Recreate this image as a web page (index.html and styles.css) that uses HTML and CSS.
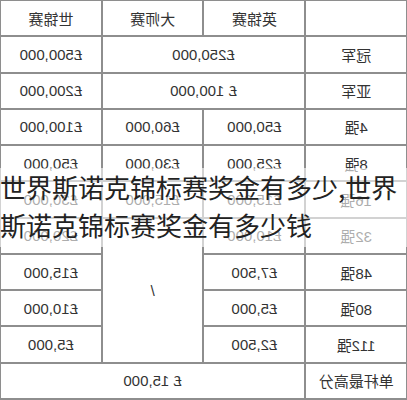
FILE: index.html
```html
<!DOCTYPE html>
<html lang="zh">
<head>
<meta charset="utf-8">
<title>世界斯诺克锦标赛奖金</title>
<link rel="stylesheet" href="styles.css">
</head>
<body>
<div class="page">
  <div class="prize-table">
    <div class="cell"></div>
    <div class="cell">英锦赛</div>
    <div class="cell">大师赛</div>
    <div class="cell">世锦赛</div>

    <div class="cell">冠军</div>
    <div class="cell span2">£250,000</div>
    <div class="cell">£500,000</div>

    <div class="cell">亚军</div>
    <div class="cell span2">£ 100,000</div>
    <div class="cell">£200,000</div>

    <div class="cell">4强</div>
    <div class="cell">£50,000</div>
    <div class="cell">£60,000</div>
    <div class="cell">£100,000</div>

    <div class="cell">8强</div>
    <div class="cell">£25,000</div>
    <div class="cell">£30,000</div>
    <div class="cell">£50,000</div>

    <div class="cell">16强</div>
    <div class="cell">£15,000</div>
    <div class="cell">£15,000</div>
    <div class="cell">£30,000</div>

    <div class="cell">32强</div>
    <div class="cell">£10,000</div>
    <div class="cell rspan4">/</div>
    <div class="cell">£20,000</div>

    <div class="cell">48强</div>
    <div class="cell">£7,500</div>
    <div class="cell">£15,000</div>

    <div class="cell">80强</div>
    <div class="cell">£5,000</div>
    <div class="cell">£10,000</div>

    <div class="cell">112强</div>
    <div class="cell">£2,500</div>
    <div class="cell">£5,000</div>

    <div class="cell">单杆最高分</div>
    <div class="cell span3">£ 15,000</div>
  </div>
  <div class="caption">世界斯诺克锦标赛奖金有多少,世界斯诺克锦标赛奖金有多少钱</div>
</div>
</body>
</html>
```

FILE: styles.css
```css
html, body {
  margin: 0;
  padding: 0;
  background: #ffffff;
}

.page {
  position: relative;
  width: 407px;
  height: 400px;
  overflow: hidden;
}

.prize-table {
  display: grid;
  grid-template-columns: repeat(4, 1fr);
  grid-template-rows: repeat(11, 1fr);
  gap: 2px;
  padding: 1px 1px 2px 1px;
  box-sizing: border-box;
  width: 407px;
  height: 400px;
  background: #8e8e8e;
  transform: scaleX(-1);
  font-family: "Liberation Sans", "Noto Sans CJK SC", sans-serif;
  font-size: 15px;
  color: #333333;
}

.cell {
  background: #ffffff;
  display: flex;
  align-items: center;
  justify-content: center;
  white-space: nowrap;
}

.span2 {
  grid-column: span 2;
}

.span3 {
  grid-column: span 3;
}

.rspan4 {
  grid-row: span 4;
}

.caption {
  position: absolute;
  left: 0;
  top: 168px;
  width: 407px;
  height: 79px;
  box-sizing: border-box;
  background: rgba(255, 255, 255, 0.6);
  font-family: "Noto Sans CJK SC", sans-serif;
  font-size: 26px;
  line-height: 38px;
  color: #222222;
}
```
